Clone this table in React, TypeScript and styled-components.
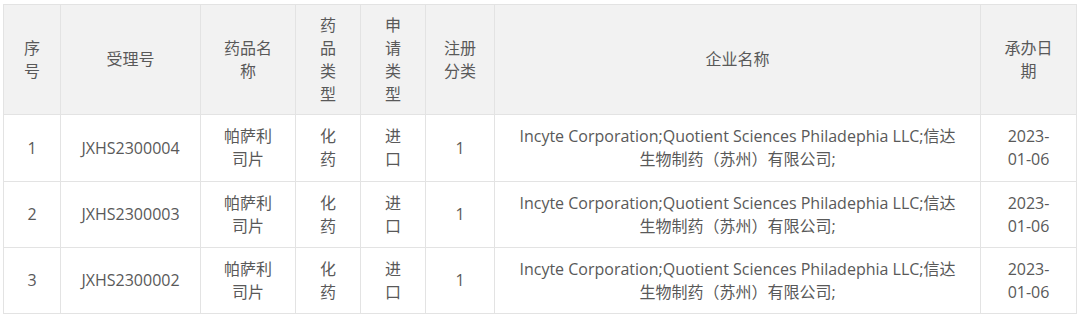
import React from "react";
import styled, { createGlobalStyle } from "styled-components";

const Global = createGlobalStyle`
  html, body { margin: 0; padding: 0; background: #ffffff; }
  body { font-family: "Open Sans", "Noto Sans CJK SC", sans-serif; }
`;

const Wrap = styled.div`
  padding: 4px 0 0 3px;
`;

const Table = styled.table`
  border-collapse: collapse;
  table-layout: fixed;
  width: 1073px;
  font-size: 16px;
  line-height: 23px;
  color: #595959;
`;

const Th = styled.th`
  background: #f2f2f2;
  border: 1px solid #e3e3e3;
  font-weight: normal;
  padding: 0 17px;
  height: 110px;
  text-align: center;
  vertical-align: middle;
  box-sizing: border-box;
`;

const Td = styled.td<{ $h: number }>`
  border: 1px solid #e3e3e3;
  padding: 0 17px;
  height: ${(p) => p.$h}px;
  text-align: center;
  vertical-align: middle;
  box-sizing: border-box;
`;

const widths = [57, 140, 95, 65, 65, 69, 486, 96];
const headers = ["序号", "受理号", "药品名称", "药品类型", "申请类型", "注册分类", "企业名称", "承办日期"];

const rows = [
  { n: "1", id: "JXHS2300004", h: 67 },
  { n: "2", id: "JXHS2300003", h: 66 },
  { n: "3", id: "JXHS2300002", h: 66 },
];

export default function App() {
  return (
    <Wrap>
      <Global />
      <Table>
        <colgroup>
          {widths.map((w, i) => (
            <col key={i} style={{ width: w }} />
          ))}
        </colgroup>
        <thead>
          <tr>
            {headers.map((h) => (
              <Th key={h}>{h}</Th>
            ))}
          </tr>
        </thead>
        <tbody>
          {rows.map((r) => (
            <tr key={r.n}>
              <Td $h={r.h}>{r.n}</Td>
              <Td $h={r.h}>{r.id}</Td>
              <Td $h={r.h}>帕萨利司片</Td>
              <Td $h={r.h}>化药</Td>
              <Td $h={r.h}>进口</Td>
              <Td $h={r.h}>1</Td>
              <Td $h={r.h}>
                Incyte Corporation;Quotient Sciences Philadephia LLC;信达生物制药（苏州）有限公司;
              </Td>
              <Td $h={r.h}>2023-01-06</Td>
            </tr>
          ))}
        </tbody>
      </Table>
    </Wrap>
  );
}
